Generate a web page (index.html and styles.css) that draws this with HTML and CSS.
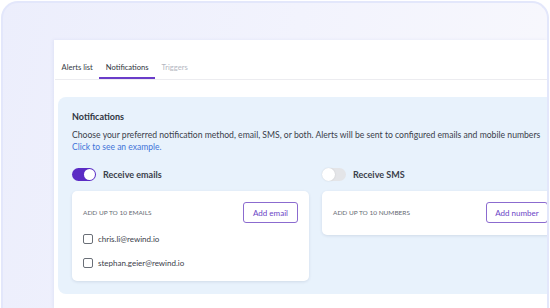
FILE: index.html
```html
<!DOCTYPE html>
<html>
<head>
<meta charset="utf-8">
<link rel="stylesheet" href="styles.css">
</head>
<body>
<div class="frame">
  <div class="panel">
    <nav class="tabs">
      <span class="tab">Alerts list</span>
      <span class="tab active">Notifications</span>
      <span class="tab muted">Triggers</span>
    </nav>
    <section class="box">
      <h2 class="title">Notifications</h2>
      <p class="desc">Choose your preferred notification method, email, SMS, or both. Alerts will be sent to configured emails and mobile numbers</p>
      <a class="link">Click to see an example.</a>
      <div class="cols">
        <div class="col">
          <div class="switch-row">
            <span class="switch on"><span class="knob"></span></span>
            <span class="switch-label">Receive emails</span>
          </div>
          <div class="card">
            <div class="card-head">
              <span class="caps">ADD UP TO 10 EMAILS</span>
              <span class="btn">Add email</span>
            </div>
            <label class="check"><span class="cb"></span>chris.li@rewind.io</label>
            <label class="check"><span class="cb"></span>stephan.geier@rewind.io</label>
          </div>
        </div>
        <div class="col">
          <div class="switch-row">
            <span class="switch"><span class="knob"></span></span>
            <span class="switch-label">Receive SMS</span>
          </div>
          <div class="card">
            <div class="card-head">
              <span class="caps">ADD UP TO 10 NUMBERS</span>
              <span class="btn">Add number</span>
            </div>
          </div>
        </div>
      </div>
    </section>
  </div>
</div>
</body>
</html>
```
FILE: styles.css
```css
* { box-sizing: border-box; margin: 0; padding: 0; }
html, body { width: 550px; height: 308px; overflow: hidden; background: #ffffff; }
body { font-family: Lato, "Open Sans", sans-serif; color: #353b45; }

.frame {
  margin: 1px 1px 0 1px;
  height: 307px;
  border: 2px solid #e3e7fb;
  border-bottom: none;
  border-radius: 17px 17px 0 0;
  background: linear-gradient(100deg, #eceefc 0%, #f2f3fd 50%, #f8f8fd 100%);
  padding: 37px 0 0 51px;
  overflow: hidden;
}

.panel {
  background: #ffffff;
  height: 268px;
  box-shadow: -1px 0 3px rgba(120, 130, 200, 0.12);
  padding: 0 0 0 1px;
  overflow: hidden;
}

.tabs {
  display: flex;
  padding-top: 22px;
  border-bottom: 1px solid #ececf0;
}
.tab {
  font-size: 7.6px;
  line-height: 10px;
  padding: 0 6.5px 5px;
  color: #353b45;
  border-bottom: 2px solid transparent;
}
.tab.active { border-bottom-color: #6a3cc9; color: #2e3440; }
.tab.muted { color: #b4b7bf; }

.box {
  margin: 17px 0 0 3px;
  background: #e8f2fc;
  border-radius: 8px 0 0 8px;
  padding: 14px 0 12px 14px;
  height: 197px;
}
.title {
  font-size: 9px;
  font-weight: 700;
  line-height: 12px;
  color: #303641;
}
.desc {
  margin-top: 6px;
  font-size: 8.65px;
  line-height: 12px;
  white-space: nowrap;
  color: #3a404a;
}
.link {
  display: block;
  font-size: 8.5px;
  line-height: 12px;
  color: #3f73d8;
}

.cols {
  display: grid;
  grid-template-columns: 237px 237px;
  gap: 13px;
  margin-top: 14px;
  align-items: start;
}
.switch-row {
  display: flex;
  align-items: center;
  gap: 7px;
  height: 14px;
}
.switch {
  width: 24px;
  height: 13px;
  border-radius: 7px;
  background: #e4e5e8;
  position: relative;
  display: inline-block;
}
.switch .knob {
  position: absolute;
  left: 0;
  top: 0;
  width: 13px;
  height: 13px;
  border-radius: 50%;
  background: #fff;
  box-shadow: 0 0 2px rgba(0, 0, 0, 0.12);
}
.switch.on { background: #5b2cc4; }
.switch.on .knob { left: 12px; width: 11px; height: 11px; top: 1px; box-shadow: none; }
.switch-label {
  font-size: 9px;
  font-weight: 700;
  color: #3a404b;
}

.card {
  margin-top: 10px;
  background: #ffffff;
  border-radius: 5px;
  box-shadow: 0 1px 3px rgba(40, 60, 100, 0.12);
  padding: 11px 11px 12px 11px;
}
.card-head {
  display: flex;
  justify-content: space-between;
  align-items: center;
}
.caps {
  font-size: 6.5px;
  color: #666b73;
}
.btn {
  width: 55px;
  height: 21px;
  border: 1px solid #8b6bcf;
  border-radius: 3px;
  display: flex;
  align-items: center;
  justify-content: center;
  font-size: 8px;
  color: #6b45c6;
  white-space: nowrap;
}
.col + .col .btn { width: 62px; }
.check {
  display: flex;
  align-items: center;
  gap: 5px;
  font-size: 8px;
  color: #3a404a;
  height: 12px;
}
.card-head + .check { margin-top: 10px; }
.check + .check { margin-top: 12px; }
.cb {
  width: 10px;
  height: 10px;
  border: 1px solid #6a6f77;
  border-radius: 2px;
  background: #fff;
}
```
